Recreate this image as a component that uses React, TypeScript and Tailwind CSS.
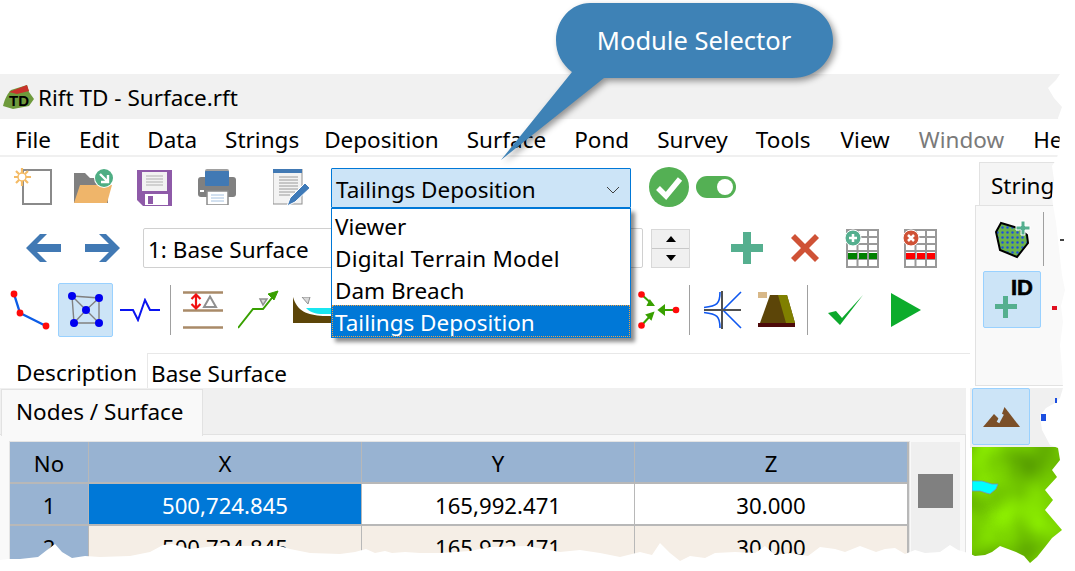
import React from "react";

const Sep = ({ h = 50 }: { h?: number }) => (
  <div className="w-px bg-[#a0a0a0] shrink-0" style={{ height: h }} />
);

const NewIcon = () => (
  <svg width="38" height="38" viewBox="0 0 38 38" className="shrink-0">
    <rect x="9" y="2" width="28" height="34" fill="#fff" stroke="#8a8a8a" strokeWidth="2" />
    <g stroke="#f4bb66" strokeWidth="2.200">
      <path d="M8 0V18M-1 9H17M2 3L14 15M14 3L2 15" />
    </g>
    <circle cx="8" cy="9" r="4" fill="#fff" stroke="#f4bb66" strokeWidth="1.500" />
  </svg>
);
const OpenIcon = () => (
  <svg width="40" height="36" viewBox="0 0 40 36" className="shrink-0">
    <path d="M0 4H11L16 9H34V34H0Z" fill="#808080" />
    <path d="M6 16H38L33 34H0Z" fill="#efb56a" />
    <circle cx="30" cy="9" r="10" fill="#fff" />
    <circle cx="30" cy="9" r="9" fill="#4fae84" />
    <path d="M26 5L33 12M34 6V13H27" stroke="#fff" strokeWidth="2.400" fill="none" />
  </svg>
);
const SaveIcon = () => (
  <svg width="36" height="37" viewBox="0 0 36 37" className="shrink-0">
    <path d="M0 1H35V37H6L0 31Z" fill="#8e5aa8" />
    <rect x="5" y="3" width="25" height="19" fill="#f2f2f2" />
    <path d="M9 7H26M9 10H26M9 13H26M9 16H26" stroke="#b0b0b0" strokeWidth="1" />
    <rect x="8" y="25" width="23" height="11" fill="#fff" />
    <rect x="11" y="27" width="5" height="8" fill="#8e5aa8" />
  </svg>
);
const PrintIcon = () => (
  <svg width="38" height="36" viewBox="0 0 38 36" className="shrink-0">
    <rect x="7" y="0" width="24" height="10" rx="2" fill="#a0a0a0" />
    <rect x="0" y="8" width="38" height="20" rx="3" fill="#808080" />
    <rect x="7" y="2" width="24" height="15" rx="1" fill="#4179b4" />
    <rect x="2" y="21" width="4" height="2" fill="#fff" />
    <rect x="9" y="22" width="21" height="14" fill="#fff" stroke="#8a8a8a" strokeWidth="1.500" />
    <path d="M13 26H26M13 29H26M13 32H26" stroke="#a6c2e0" />
  </svg>
);
const NotesIcon = () => (
  <svg width="38" height="37" viewBox="0 0 38 37" className="shrink-0">
    <rect x="0" y="0" width="29" height="35" fill="#f3f3f3" stroke="#909090" />
    <rect x="0" y="0" width="29" height="4" fill="#4179b4" />
    <path d="M6 8H25M6 11H25M6 14H25M6 17H25M6 20H25M6 23H22M6 26H17" stroke="#9a9a9a" />
    <path d="M14 37L17 29L32 14L37 19L22 33Z" fill="#3f7ab8" stroke="#fff" strokeWidth="1" />
  </svg>
);

const Polyline = () => (
  <svg width="40" height="40" viewBox="0 0 40 40" className="shrink-0">
    <path d="M4 4L10 23L36 36" stroke="#0c5ce6" strokeWidth="2.400" fill="none" />
    <circle cx="4" cy="4" r="3.400" fill="#ff0a0a" />
    <circle cx="10" cy="23" r="3.400" fill="#ff0a0a" />
    <circle cx="36" cy="36" r="3.400" fill="#ff0a0a" />
  </svg>
);
const Mesh = () => (
  <svg width="36" height="36" viewBox="0 0 36 36">
    <path d="M4 4L31 6L31 31L6 31ZM4 4L18 18L31 6M6 31L18 18L31 31" stroke="#808080" strokeWidth="1.400" fill="none" />
    {[[4, 4], [31, 6], [18, 18], [6, 31], [31, 31]].map(([x, y]) => (
      <circle key={x * 100 + y} cx={x} cy={y} r="4" fill="#0000f0" />
    ))}
  </svg>
);
const Wave = () => (
  <svg width="40" height="24" viewBox="0 0 40 24" className="shrink-0">
    <path d="M0 12H13L18 22L25 2L30 12H40" stroke="#0a14f0" strokeWidth="2" fill="none" />
  </svg>
);
const Levels = () => (
  <svg width="40" height="38" viewBox="0 0 40 38" className="shrink-0">
    <path d="M0 1.500H40M0 19.500H40M0 36.500H40" stroke="#a98a68" strokeWidth="2.400" />
    <path d="M13 4V17M8.500 8L13 3.500L17.500 8M8.500 13L13 17.500L17.500 13" stroke="#f01010" strokeWidth="2.200" fill="none" />
    <path d="M21 16L27 5.500L33 16Z" stroke="#909090" strokeWidth="2" fill="none" />
  </svg>
);
const Rising = () => (
  <svg width="42" height="42" viewBox="0 0 42 42" className="shrink-0">
    <path d="M0 39L15 20H25L37 5" stroke="#38a000" strokeWidth="2" fill="none" />
    <path d="M30 5L40 2L36 11Z" fill="#38a000" stroke="#38a000" />
    <path d="M22 10H29L25 16Z" stroke="#909090" strokeWidth="1.500" fill="#d8d8d8" />
  </svg>
);
const Pond = () => (
  <svg width="40" height="26" viewBox="0 0 40 26" className="shrink-0">
    <path d="M0 0C4 14 14 18 30 19L40 19V26H0Z" fill="#5c4508" />
    <path d="M13 11H40V17H30C22 17 17 15 13 11Z" fill="#19e6f0" />
    <path d="M9 0H17L15 7Z" fill="#d8d8d8" stroke="#909090" />
  </svg>
);
const Branch = () => (
  <svg width="42" height="38" viewBox="0 0 42 38" className="shrink-0">
    <g stroke="#38a000" strokeWidth="2" fill="#38a000">
      <path d="M3 3L15 14" />
      <path d="M3 35L13 24" />
      <path d="M24 19H39" />
      <path d="M12 10L15 14L10 14Z" />
      <path d="M9 24L15 22L13 28Z" />
      <path d="M26 15V23L21 19Z" />
    </g>
    <circle cx="3.500" cy="3.500" r="3.300" fill="#ff0a0a" />
    <circle cx="3.500" cy="34.500" r="3.300" fill="#ff0a0a" />
    <circle cx="38" cy="19" r="3.300" fill="#ff0a0a" />
  </svg>
);
const Fan = () => (
  <svg width="40" height="38" viewBox="0 0 40 38" className="shrink-0">
    <path d="M17 1C17 13 14 15 1 16.500M1 21.500C14 23 17 25 17 37M38 1L20 19L38 37" stroke="#1058f0" strokeWidth="1.600" fill="none" />
    <path d="M1 19H38M19 0V38" stroke="#505050" strokeWidth="2" />
  </svg>
);
const Dam = () => (
  <svg width="38" height="36" viewBox="0 0 38 36" className="shrink-0">
    <rect x="0" y="0" width="9" height="6" fill="#d8b888" />
    <path d="M12 3H29L37 31H2Z" fill="#5c4508" />
    <path d="M20 3H29L37 31H28Z" fill="#808000" />
    <rect x="0" y="31" width="37" height="4" fill="#4d0a0a" />
  </svg>
);
const Check = () => (
  <svg width="36" height="30" viewBox="0 0 36 30" className="shrink-0">
    <path d="M0 18L8 16L14 23L35 0L12 30Z" fill="#0ca82c" />
  </svg>
);
const TableIcon = ({ fill, children }: { fill: string; children: React.ReactNode }) => (
  <svg width="35" height="39" viewBox="0 0 35 39" className="shrink-0">
    <g transform="translate(3 0)">
      <rect x="0" y="1" width="31" height="37" fill="#fff" stroke="#999" strokeWidth="2" />
      <path d="M10.500 1V38M21 1V38M0 8H31M0 15H31M0 22H31M0 30H31" stroke="#999" strokeWidth="2" />
      <rect x="1" y="24" width="9" height="6" fill={fill} />
      <rect x="12" y="24" width="8" height="6" fill={fill} />
      <rect x="22" y="24" width="8" height="6" fill={fill} />
    </g>
    {children}
  </svg>
);

const Tear = () => (
  <svg width="1075" height="571" viewBox="0 0 1075 571" className="absolute left-0 top-0 pointer-events-none">
    <path
      fill="#fff"
      d="M1060 74L1056 80L1048 88L1054 98L1062 107L1058 118L1060 130L1059 150L1057 158L1052 166L1054 180L1052 196L1053 205L1056 222L1058 240L1060 258L1062 275L1065 290L1061 306L1063 322L1060 345L1062 368L1063 388L1060 398L1055 403L1046 408L1040 416L1042 430L1050 445L1058 448L1060 460L1052 470L1057 477L1045 490L1053 500L1045 510L1062 530L1052 538L1045 547L1037 557L1030 563L1024 556L1016 552L1008 549L1000 546L992 552L985 555L975 556L968 553L958 550L950 545L940 552L925 553L915 550L905 554L895 548L885 549L876 552L860 546L845 552L835 549L820 547L808 556L790 553L775 555L765 546L755 553L735 552L715 553L705 558L690 556L680 561L670 553L660 543L652 555L640 552L620 557L600 553L580 550L560 552L527 546L490 547L470 551L440 553L420 553L405 552L392 553L385 551L375 553L366 549L355 552L340 554L310 553L290 549L280 546L255 546L235 546L215 546L190 549L172 544L163 545L150 552L130 556L100 557L85 556L72 558L62 552L55 544L47 550L38 557L20 559L8 559L0 560V571H1075V0H1060Z"
    />
  </svg>
);

const MapPic = () => (
  <svg width="103" height="123" viewBox="0 0 103 123" className="block">
    <defs>
      <filter id="terrain" x="0" y="0" width="100%" height="100%" colorInterpolationFilters="sRGB">
        <feTurbulence type="fractalNoise" baseFrequency="0.022" numOctaves="2" seed="11" />
        <feColorMatrix values="0.3 0 0 0 0.3  0.45 0 0 0 0.56  0 0 0 0 0  0 0 0 0 1" />
      </filter>
    </defs>
    <rect width="103" height="123" filter="url(#terrain)" />
    <path d="M0 34H10L20 37H26L24 42L18 47L14 46L8 44H0Z" fill="#00ffff" stroke="#7a90b0" strokeWidth="0.800" />
  </svg>
);

const RowCell = ({ children, cls }: { children: React.ReactNode; cls: string }) => (
  <div className={`flex items-center justify-center pt-[5px] ${cls}`}>{children}</div>
);

export default function App() {
  return (
    <div className="relative w-[1075px] h-[571px] overflow-hidden bg-white text-black text-[22.500px] leading-none font-['Noto_Sans','Open_Sans',sans-serif]">
      <div className="h-[74px]" />
      {/* title bar */}
      <div className="h-[45px] bg-[#f1f1f1] flex items-center pl-[3px]">
        <div className="relative w-[31px] h-[26px] shrink-0">
          <svg width="31" height="26" viewBox="0 0 31 26" className="absolute left-0 top-0">
            <path d="M0 22C2 14 5 9 8 6L24 1L26 8L31 15L26 22L10 25Z" fill="#6e9a3c" />
            <path d="M6 8L24 1L26 7L14 10Z" fill="#c8322b" />
          </svg>
          <span className="absolute left-[6px] top-[9px] text-[15px] leading-none font-bold font-['Liberation_Sans',sans-serif]">TD</span>
        </div>
        <span className="ml-[4px] pt-[4px]">Rift TD - Surface.rft</span>
      </div>
      {/* menu */}
      <div className="h-[38px] border-b-2 border-[#f0f0f0] flex items-center pl-[15px] pt-[6px] gap-[28px] whitespace-nowrap">
        <span>File</span>
        <span>Edit</span>
        <span>Data</span>
        <span>Strings</span>
        <span className="-ml-[3px]">Deposition</span>
        <span>Surface</span>
        <span>Pond</span>
        <span>Survey</span>
        <span>Tools</span>
        <span className="ml-[2px]">View</span>
        <span className="ml-[1px] text-[#7a7a7a]">Window</span>
        <span className="ml-[1px]">Help</span>
      </div>
      <div className="flex">
        {/* left */}
        <div className="w-[970px] shrink-0">
          <div className="h-[60px] flex items-center pl-[14px]">
            <NewIcon />
            <div className="ml-[22px]"><OpenIcon /></div>
            <div className="ml-[23px]"><SaveIcon /></div>
            <div className="ml-[25px]"><PrintIcon /></div>
            <div className="ml-[37px]"><NotesIcon /></div>
            <div className="ml-[20px] mt-[1px] w-[300px] h-[40px] bg-[#cce4f7] border border-[#0078d7] flex items-center justify-between pl-[4px] pr-[10px] pt-[5px] rounded-[1px]">
              <span>Tailings Deposition</span>
              <svg width="14" height="8" viewBox="0 0 14 8"><path d="M1 1L7 7L13 1" stroke="#404040" strokeWidth="1" fill="none" /></svg>
            </div>
            <svg width="40" height="40" viewBox="0 0 40 40" className="ml-[18px] shrink-0">
              <circle cx="20" cy="20" r="20" fill="#54b054" />
              <path d="M9 21L17 29L31 12" stroke="#fff" strokeWidth="5.500" fill="none" />
            </svg>
            <div className="ml-[7px] w-[40px] h-[22px] rounded-full bg-[#54b054] relative">
              <div className="absolute right-[3px] top-[3px] w-[16px] h-[16px] rounded-full bg-white" />
            </div>
          </div>
          <div className="h-[62px] flex items-center pl-[26px]">
            <svg width="35" height="28" viewBox="0 0 35 28" className="shrink-0"><path d="M14 0H21L11 10H35V18H11L21 28H14L0 14Z" fill="#4179b4" /></svg>
            <svg width="35" height="28" viewBox="0 0 35 28" className="ml-[24px] shrink-0"><path d="M21 0H14L24 10H0V18H24L14 28H21L35 14Z" fill="#4179b4" /></svg>
            <div className="ml-[23px] w-[500px] h-[40px] border border-[#d0d0d0] rounded-[2px] flex items-center pl-[4px] pt-[4px]">1: Base Surface</div>
            <div className="ml-[8px] w-[39px] h-[39px] border border-[#d8d8d8] bg-[#f0f0f0] flex flex-col shrink-0">
              <div className="flex-1 flex items-center justify-center border-b border-[#c8c8c8]">
                <div className="w-0 h-0 border-x-[5px] border-x-transparent border-b-[6px] border-b-black" />
              </div>
              <div className="flex-1 flex items-center justify-center">
                <div className="w-0 h-0 border-x-[5px] border-x-transparent border-t-[6px] border-t-black" />
              </div>
            </div>
            <svg width="32" height="32" viewBox="0 0 32 32" className="ml-[41px] shrink-0"><path d="M12 0H20V12H32V20H20V32H12V20H0V12H12Z" fill="#55af8f" /></svg>
            <svg width="28" height="28" viewBox="0 0 28 28" className="ml-[28px] shrink-0"><path d="M4 0L14 10L24 0L28 4L18 14L28 24L24 28L14 18L4 28L0 24L10 14L0 4Z" fill="#cf5236" /></svg>
            <div className="ml-[25px]">
              <TableIcon fill="#008000">
                <circle cx="9" cy="9" r="8" fill="#55af8f" stroke="#fff" />
                <path d="M9 5V13M5 9H13" stroke="#fff" strokeWidth="2.500" />
              </TableIcon>
            </div>
            <div className="ml-[23px]">
              <TableIcon fill="#ff0000">
                <circle cx="9" cy="9" r="8" fill="#cf5236" stroke="#fff" />
                <path d="M6 6L12 12M12 6L6 12" stroke="#fff" strokeWidth="2.500" />
              </TableIcon>
            </div>
          </div>
          <div className="h-[62px] flex items-center pl-[10px]">
            <Polyline />
            <div className="ml-[8px] w-[55px] h-[54px] bg-[#cce4f7] border border-[#99d1ff] rounded-[2px] flex items-center justify-center shrink-0"><Mesh /></div>
            <div className="ml-[7px]"><Wave /></div>
            <div className="ml-[10px]"><Sep /></div>
            <div className="ml-[12px]"><Levels /></div>
            <div className="ml-[15px]"><Rising /></div>
            <div className="ml-[13px]"><Pond /></div>
            <div className="ml-[305px]"><Branch /></div>
            <div className="ml-[9px]"><Sep /></div>
            <div className="ml-[13px]"><Fan /></div>
            <div className="ml-[15px]"><Dam /></div>
            <div className="ml-[11px]"><Sep /></div>
            <div className="ml-[20px]"><Check /></div>
            <svg width="30" height="34" viewBox="0 0 30 34" className="ml-[27px] shrink-0"><path d="M0 0L30 17L0 34Z" fill="#0cac2c" /></svg>
          </div>
          <div className="h-[47px] flex items-end">
            <span className="w-[147px] pl-[16px] pb-[4px] shrink-0">Description</span>
            <div className="flex-1 h-[35px] border-t border-l border-[#e8e8e8] pl-[3px] flex items-center pt-[6px]">Base Surface</div>
          </div>
          {/* grid panel */}
          <div className="bg-[#f0f0f0] h-[183px] w-[966px]">
            <div className="flex h-[47px] border-b border-[#e2e2e2]">
              <div className="ml-[1px] mt-[1px] w-[202px] h-[47px] bg-[#f9f9f9] border border-b-0 border-[#e2e2e2] flex items-center pl-[14px] pb-[1px] relative">Nodes / Surface</div>
            </div>
            <div className="bg-[#f9f9f9] border-r border-[#e2e2e2] h-[136px] pl-[10px] pt-[7px] flex text-[22.200px]">
              <div className="grid grid-cols-[78px_272px_272px_272px] gap-x-[1px] gap-y-[2px] bg-[#b8b8b8] self-start pb-[2px] pr-[2px] w-[899px] h-[130px] grid-rows-[40px_40px_40px] outline-1 outline-[#e4e4e4]">
                <RowCell cls="bg-[#98b3d2]">No</RowCell>
                <RowCell cls="bg-[#98b3d2]">X</RowCell>
                <RowCell cls="bg-[#98b3d2]">Y</RowCell>
                <RowCell cls="bg-[#98b3d2]">Z</RowCell>
                <RowCell cls="bg-[#98b3d2]">1</RowCell>
                <RowCell cls="bg-[#0078d7] text-white">500,724.845</RowCell>
                <RowCell cls="bg-white">165,992.471</RowCell>
                <RowCell cls="bg-white">30.000</RowCell>
                <RowCell cls="bg-[#98b3d2]">2</RowCell>
                <RowCell cls="bg-[#f5eee6]">500,724.845</RowCell>
                <RowCell cls="bg-[#f5eee6]">165,972.471</RowCell>
                <RowCell cls="bg-[#f5eee6]">30.000</RowCell>
              </div>
              <div className="ml-[2px] w-[49px] h-[130px] bg-[#efefef] pt-[32px] pl-[7px]">
                <div className="w-[35px] h-[34px] bg-[#808080]" />
              </div>
            </div>
          </div>
        </div>
        {/* right */}
        <div className="w-[105px] shrink-0">
          <div className="ml-[9px] mt-[5px] h-[43px] bg-[#f5f5f5] border border-b-0 border-[#e2e2e2] flex items-center pl-[11px] pt-[4px]">String</div>
          <div className="ml-[5px] h-[181px] bg-[#f9f9f9] border border-[#e2e2e2] pl-[7px] pt-[6px]">
            <div className="flex items-start">
              <svg width="36" height="40" viewBox="0 0 36 40" className="ml-[12px] mt-[8px] shrink-0">
                <defs>
                  <pattern id="dots" width="5" height="5" patternUnits="userSpaceOnUse"><rect width="5" height="5" fill="#6bb24f" /><circle cx="2.500" cy="2.500" r="1.200" fill="#1c4fe0" /></pattern>
                </defs>
                <path d="M6 3L1 12L5 30L22 37L33 23L32 15L23 8Z" fill="url(#dots)" stroke="#000" strokeWidth="2" />
                <path d="M26 1H30V6H35V10H30V15H26V10H21V6H26Z" fill="#55af8f" stroke="#fff" strokeWidth="1" />
              </svg>
              <div className="ml-[12px] w-px h-[54px] bg-[#a0a0a0]" />
            </div>
            <div className="mt-[5px] w-[58px] h-[57px] bg-[#cce4f7] border border-[#99d1ff] rounded-[2px] relative">
              <span className="absolute right-[7px] top-[5px] text-[22px] leading-none font-bold [-webkit-text-stroke:0.6px_black] font-['Liberation_Sans',sans-serif]">ID</span>
              <svg width="22" height="22" viewBox="0 0 22 22" className="absolute left-[11px] bottom-[9px]"><path d="M8 0H13V8H22V13H13V22H8V13H0V8H8Z" fill="#55af8f" /></svg>
            </div>
          </div>
          <div className="h-[2px]" />
          <div className="bg-[#f0f0f0] h-[60px] pl-[2px]">
            <div className="w-[58px] h-[57px] bg-[#cce4f7] border border-[#99d1ff] rounded-[2px] flex items-center justify-center">
              <svg width="37" height="20" viewBox="0 0 37 20">
                <path d="M0 20L11 7L24 20Z" fill="#7b4f28" />
                <path d="M14 20L21.500 0L37 20Z" fill="#7b4f28" />
                <path d="M19.500 7L15 15.500" stroke="#cce4f7" strokeWidth="3" />
              </svg>
            </div>
          </div>
          <div className="pl-[2px] -mt-[1px]"><MapPic /></div>
        </div>
      </div>

      {/* dropdown list */}
      <div className="absolute left-[331px] top-[208px] w-[300px] h-[130px] bg-white border border-[#0078d7] shadow-[4px_4px_4px_rgba(0,0,0,0.45)]">
        <div className="h-[32px] flex items-center pl-[3px] pt-[4px]">Viewer</div>
        <div className="h-[32px] flex items-center pl-[3px] pt-[4px] tracking-[0.2px]">Digital Terrain Model</div>
        <div className="h-[32px] flex items-center pl-[3px] pt-[4px]">Dam Breach</div>
        <div className="h-[32px] flex items-center pl-[2px] pt-[5px] bg-[#0078d7] text-white border border-dotted border-[#f0a040]">Tailings Deposition</div>
      </div>

      <Tear />

      {/* stray marks left of the torn edge */}
      <div className="absolute left-[1060px] top-[239px] w-[4px] h-[2px] bg-[#444]" />
      <div className="absolute left-[1052px] top-[306px] w-[5px] h-[4px] bg-[#e01020]" />
      <div className="absolute left-[1055px] top-[398px] w-[2px] h-[5px] bg-[#1c4fe0]" />
      <div className="absolute left-[1041px] top-[414px] w-[5px] h-[7px] bg-[#1c4fe0]" />

      {/* callout */}
      <svg width="360" height="170" viewBox="0 0 360 170" className="absolute left-[490px] top-0 drop-shadow-[3px_3px_3px_rgba(0,0,0,0.4)]">
        <path d="M100 3H302C327 3 343 20 343 40C343 60 327 78 302 78H114L11 160L82 72C72 64 66 54 66 40C66 20 81 3 100 3Z" fill="#3e82b6" />
      </svg>
      <div className="absolute left-[556px] top-[3px] w-[276px] h-[75px] flex items-center justify-center text-white text-[25.500px]">Module Selector</div>
    </div>
  );
}
